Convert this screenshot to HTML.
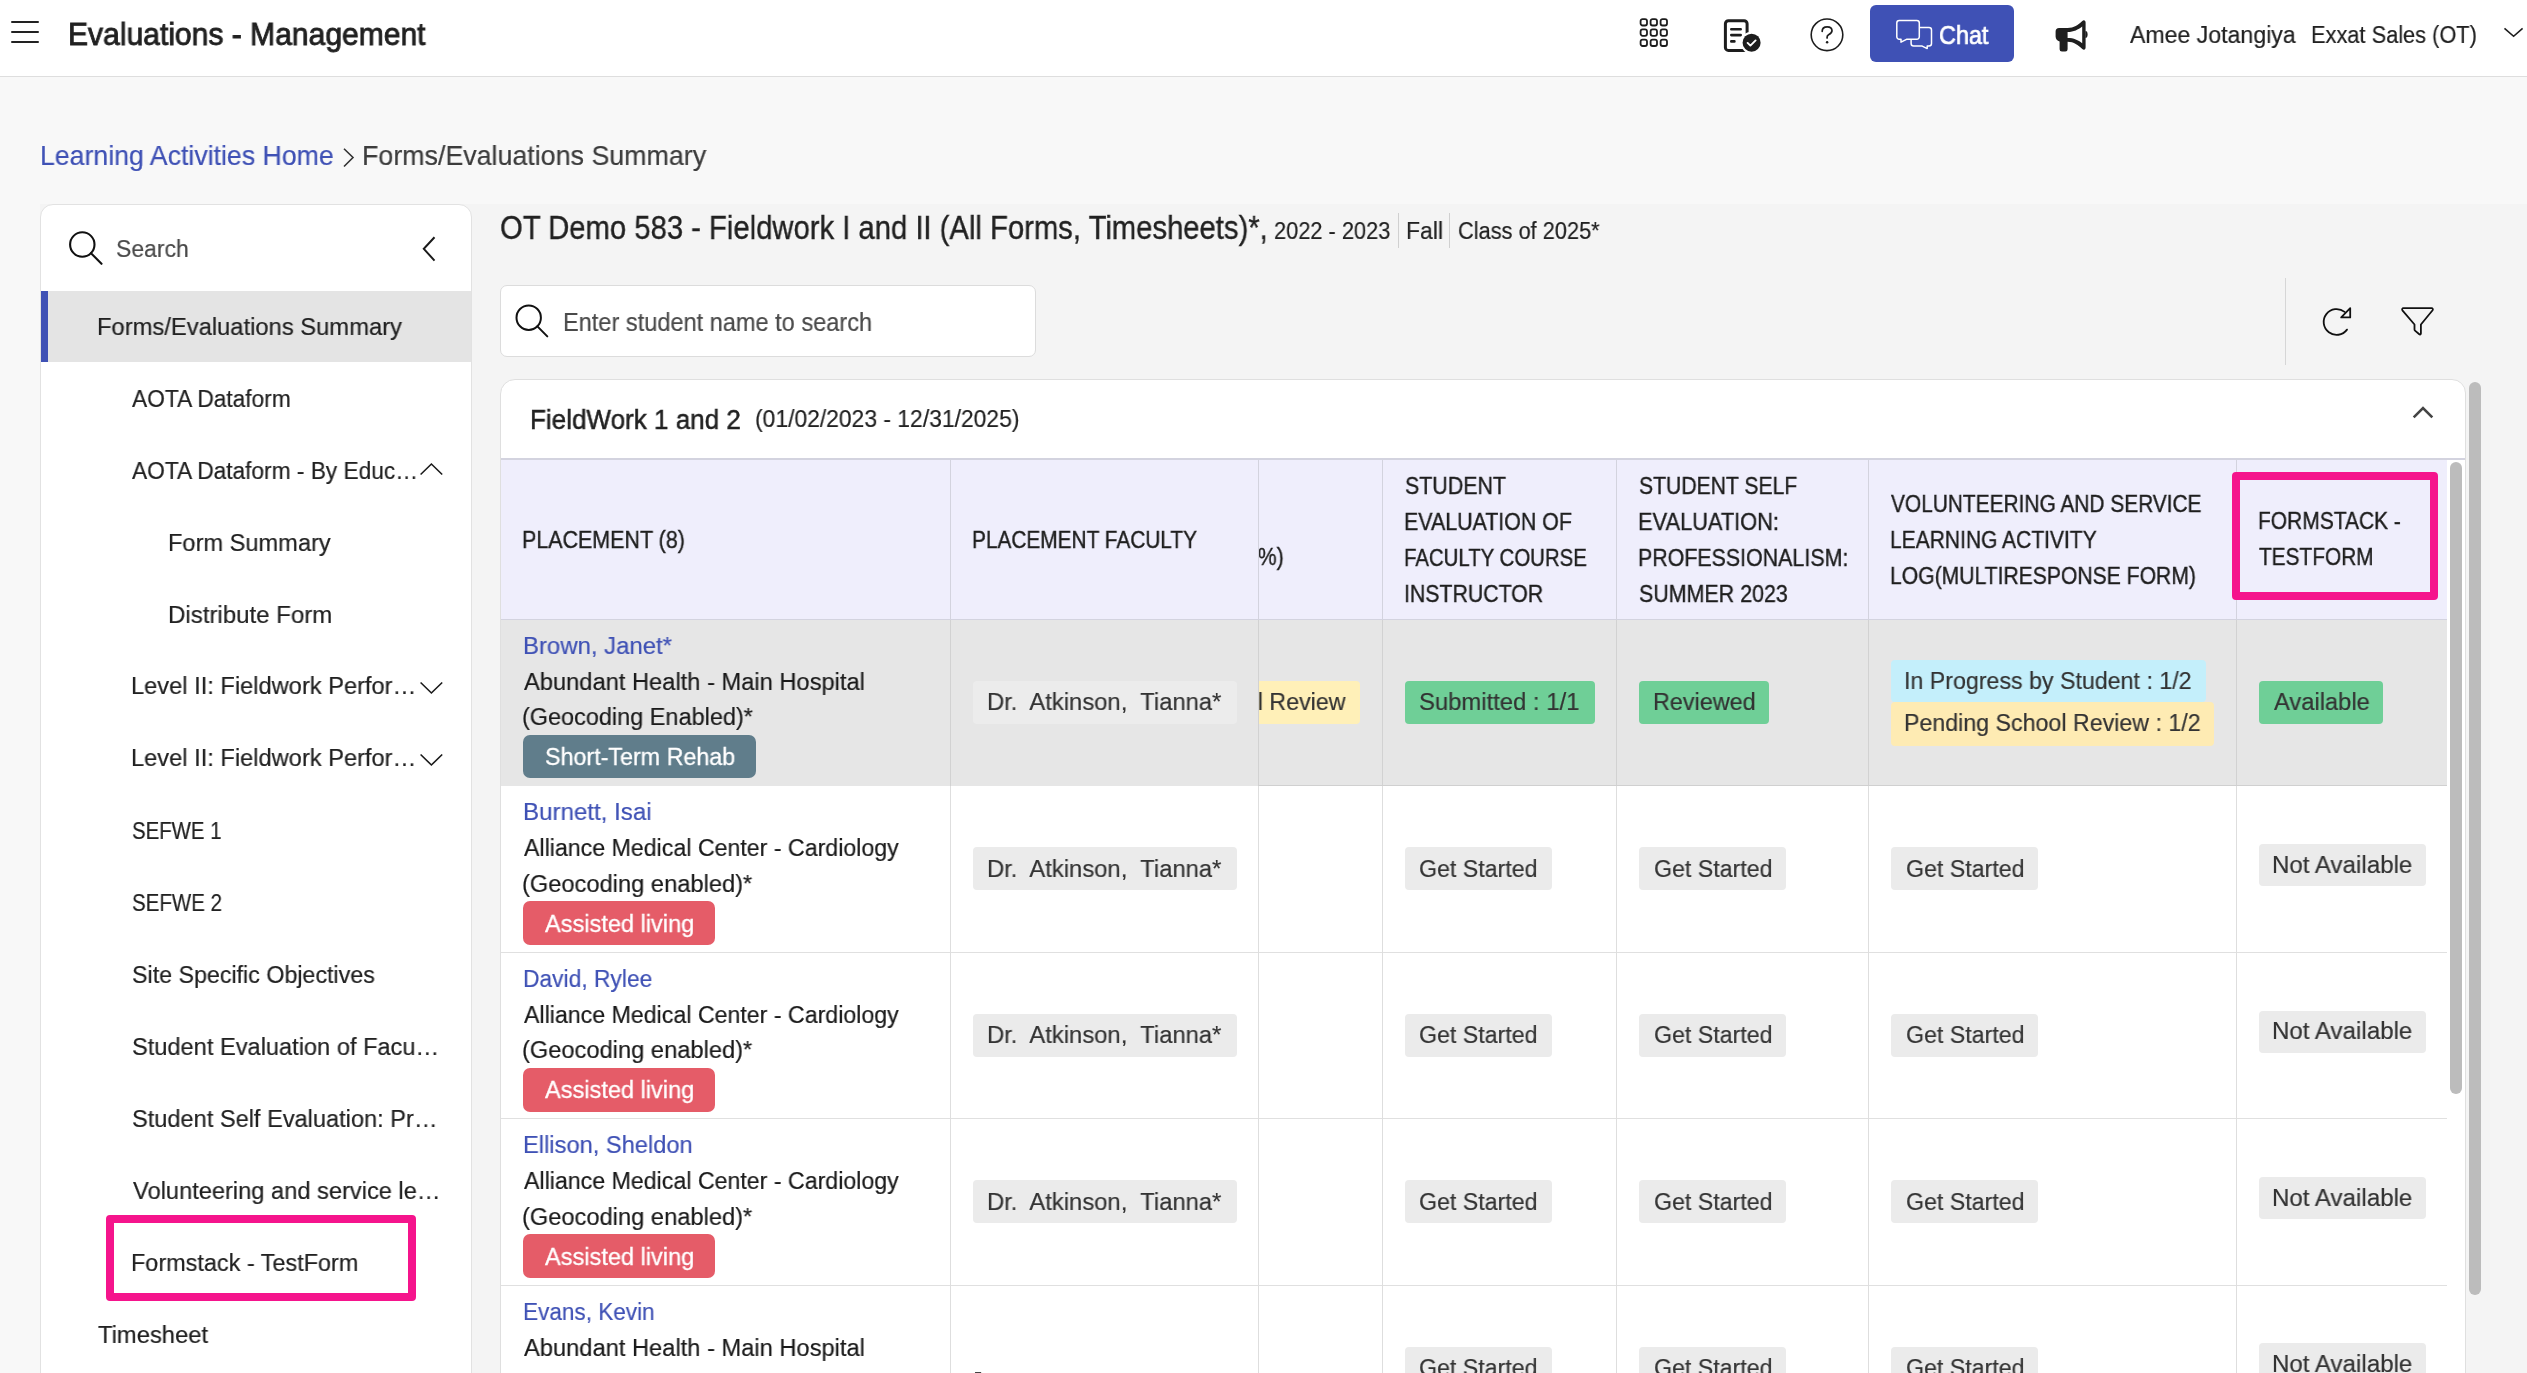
<!DOCTYPE html>
<html>
<head>
<meta charset="utf-8">
<title>Evaluations - Management</title>
<style>
html,body{margin:0;padding:0;}
body{background:#f8f8f8;font-family:"Liberation Sans",sans-serif;}
#root{position:relative;width:2527px;height:1373px;overflow:hidden;background:#f8f8f8;}
.a{position:absolute;box-sizing:border-box;}
.t{position:absolute;line-height:1;white-space:pre;transform-origin:0 0;will-change:transform;font-family:"Liberation Sans",sans-serif;}
svg{position:absolute;overflow:visible;}
</style>
</head>
<body>
<div id="root">
<!-- main area background -->
<div class="a" style="left:40px;top:204px;width:2487px;height:1169px;background:#f4f4f4;"></div>

<!-- header -->
<div class="a" style="left:0;top:0;width:2527px;height:77px;background:#fff;border-bottom:1px solid #dedede;"></div>
<!-- hamburger -->
<div class="a" style="left:11px;top:20.6px;width:28px;height:2.4px;background:#222;border-radius:1px;"></div>
<div class="a" style="left:11px;top:30.6px;width:28px;height:2.4px;background:#222;border-radius:1px;"></div>
<div class="a" style="left:11px;top:40.7px;width:28px;height:2.4px;background:#222;border-radius:1px;"></div>

<!-- grid icon -->
<svg style="left:1638px;top:17px" width="32" height="32" viewBox="0 0 32 32">
  <g fill="none" stroke="#1d1d1d" stroke-width="1.8">
    <rect x="2.6" y="2.1" width="6.4" height="6.4" rx="2"/><rect x="12.6" y="2.1" width="6.4" height="6.4" rx="2"/><rect x="22.6" y="2.1" width="6.4" height="6.4" rx="2"/>
    <rect x="2.6" y="12.4" width="6.4" height="6.4" rx="2"/><rect x="12.6" y="12.4" width="6.4" height="6.4" rx="2"/><rect x="22.6" y="12.4" width="6.4" height="6.4" rx="2"/>
    <rect x="2.6" y="22.6" width="6.4" height="6.4" rx="2"/><rect x="12.6" y="22.6" width="6.4" height="6.4" rx="2"/><rect x="22.6" y="22.6" width="6.4" height="6.4" rx="2"/>
  </g>
</svg>
<!-- doc check icon -->
<svg style="left:1720px;top:15px" width="44" height="40" viewBox="0 0 44 40">
  <rect x="5.4" y="5.8" width="21.7" height="29.6" rx="3" fill="none" stroke="#1d1d1d" stroke-width="3"/>
  <path d="M11.3 14.2 H20.7 M11.3 20.1 H20.7 M11.3 26.4 H14.4" fill="none" stroke="#1d1d1d" stroke-width="2.6" stroke-linecap="round"/>
  <circle cx="31.6" cy="27.7" r="11" fill="#fff"/>
  <circle cx="31.6" cy="27.7" r="9" fill="#1d1d1d"/>
  <path d="M27.6 27.9 L30.4 30.6 L35.6 25.4" fill="none" stroke="#fff" stroke-width="1.9" stroke-linecap="round" stroke-linejoin="round"/>
</svg>
<!-- help icon -->
<svg style="left:1807px;top:15px" width="40" height="40" viewBox="0 0 40 40">
  <circle cx="20" cy="19.8" r="15.8" fill="none" stroke="#1d1d1d" stroke-width="1.6"/>
  <path d="M15.2 16.3 C15.2 13.6 17.3 11.9 20.2 11.9 C23.1 11.9 25 13.6 25 15.8 C25 18 23.2 18.9 21.6 19.7 C20.5 20.3 20.1 21 20.1 22.2 V23" fill="none" stroke="#1d1d1d" stroke-width="1.7" stroke-linecap="round"/>
  <circle cx="20.1" cy="27.3" r="1.25" fill="#1d1d1d"/>
</svg>
<!-- chat button -->
<div class="a" style="left:1870px;top:5px;width:144px;height:57px;background:#3f51b5;border-radius:6px;"></div>
<svg style="left:1893px;top:17px" width="44" height="36" viewBox="0 0 44 36">
  <path d="M6.3 3.6 H23.8 a2.5 2.5 0 0 1 2.5 2.5 V19.8 a2.5 2.5 0 0 1 -2.5 2.5 H13.5 L8 25.2 V22.3 H6.3 a2.5 2.5 0 0 1 -2.5 -2.5 V6.1 a2.5 2.5 0 0 1 2.5 -2.5 Z" fill="none" stroke="#fff" stroke-width="1.5" stroke-linejoin="round"/>
  <path d="M26.3 10.5 H36 a2.5 2.5 0 0 1 2.5 2.5 V26.6 a2.5 2.5 0 0 1 -2.5 2.5 H34.2 V31.6 L29.2 29.1 H20.6 a2.5 2.5 0 0 1 -2.5 -2.5 V22.3" fill="none" stroke="#fff" stroke-width="1.5" stroke-linejoin="round"/>
</svg>
<!-- megaphone -->
<svg style="left:2052px;top:16px" width="40" height="40" viewBox="0 0 40 40">
  <path d="M7.1 11.9 H15.6 C22 11.9 26 9 30.3 5 Q31.5 3.8 32.6 4.4 Q33.6 5 33.6 6.5 V31.5 Q33.6 33 32.6 33.6 Q31.5 34.2 30.3 33 C26 29 22 25.7 15.6 25.7 V33.2 a2.3 2.3 0 0 1 -2.3 2.3 H9.9 a2.3 2.3 0 0 1 -2.3 -2.3 V25.5 C5.3 25 3.6 23 3.6 20.5 V15.4 a3.5 3.5 0 0 1 3.5 -3.5 Z" fill="#1f1f1f"/>
  <path d="M15.6 15.9 C22 15.9 26 13.5 30.2 10.4 V27.2 C26 24 22 22 15.6 22 Z" fill="#fff"/>
  <path d="M33.4 15.1 a2.2 3.45 0 0 1 0 6.9 Z" fill="#1f1f1f"/>
</svg>
<!-- chevron down -->
<svg style="left:2500px;top:25px" width="27" height="16" viewBox="0 0 27 16">
  <path d="M4.5 3.4 L13.6 11.3 L22.6 3.4" fill="none" stroke="#1d1d1d" stroke-width="1.6"/>
</svg>
<!-- breadcrumb chevron -->
<svg style="left:340px;top:145px" width="18" height="26" viewBox="0 0 18 26">
  <path d="M4 3.7 L13 12.5 L4 21.5" fill="none" stroke="#333" stroke-width="1.6"/>
</svg>

<!-- sidebar card -->
<div class="a" style="left:40px;top:204px;width:432px;height:1200px;background:#fff;border:1px solid #e2e2e2;border-radius:13px 13px 0 0;"></div>
<!-- sidebar search icon -->
<svg style="left:64px;top:227px" width="44" height="44" viewBox="0 0 44 44">
  <circle cx="18.3" cy="17.5" r="12.2" fill="none" stroke="#111" stroke-width="2.1"/>
  <path d="M27 26.2 L37.5 36.8" fill="none" stroke="#111" stroke-width="2.1" stroke-linecap="round"/>
</svg>
<!-- sidebar collapse chevron -->
<svg style="left:416px;top:232px" width="26" height="34" viewBox="0 0 26 34">
  <path d="M18.5 5.2 L7.8 16.8 L18.5 28.6" fill="none" stroke="#1a1a1a" stroke-width="2"/>
</svg>
<!-- active item -->
<div class="a" style="left:41px;top:291px;width:430px;height:71px;background:#e4e4e4;"></div>
<div class="a" style="left:41px;top:291px;width:7px;height:71px;background:#3f51b5;"></div>
<!-- sidebar chevrons -->
<svg style="left:416px;top:458px" width="30" height="22" viewBox="0 0 30 22">
  <path d="M4.6 16.5 L15.4 6 L26.2 16.5" fill="none" stroke="#1a1a1a" stroke-width="1.6"/>
</svg>
<svg style="left:416px;top:676px" width="30" height="22" viewBox="0 0 30 22">
  <path d="M4.6 6.5 L15.4 17 L26.2 6.5" fill="none" stroke="#1a1a1a" stroke-width="1.6"/>
</svg>
<svg style="left:416px;top:748px" width="30" height="22" viewBox="0 0 30 22">
  <path d="M4.6 6.5 L15.4 17 L26.2 6.5" fill="none" stroke="#1a1a1a" stroke-width="1.6"/>
</svg>
<!-- pink highlight sidebar -->
<div class="a" style="left:106px;top:1215px;width:310px;height:86px;border:8px solid #f5148c;border-radius:4px;"></div>

<!-- title separators -->
<div class="a" style="left:1398px;top:213px;width:1px;height:35px;background:#d0d0d0;"></div>
<div class="a" style="left:1449px;top:213px;width:1px;height:35px;background:#d0d0d0;"></div>

<!-- student search box -->
<div class="a" style="left:500px;top:285px;width:536px;height:72px;background:#fff;border:1px solid #dcdcdc;border-radius:7px;"></div>
<svg style="left:510px;top:300px" width="44" height="44" viewBox="0 0 44 44">
  <circle cx="18.7" cy="17.7" r="12.2" fill="none" stroke="#111" stroke-width="2"/>
  <path d="M27.4 26.4 L37.3 36.4" fill="none" stroke="#111" stroke-width="2" stroke-linecap="round"/>
</svg>
<!-- toolbar separator -->
<div class="a" style="left:2285px;top:278px;width:1px;height:87px;background:#d6d6d6;"></div>
<!-- refresh icon -->
<svg style="left:2316px;top:302px" width="40" height="40" viewBox="0 0 40 40">
  <path d="M28.6 9.9 A12.9 12.9 0 1 0 31 27.6" fill="none" stroke="#111" stroke-width="1.8" stroke-linecap="round"/>
  <path d="M34.2 6.2 V15.4 H25.2 Z" fill="none" stroke="#111" stroke-width="1.8" stroke-linejoin="round"/>
</svg>
<!-- filter icon -->
<svg style="left:2396px;top:303px" width="44" height="40" viewBox="0 0 44 40">
  <path d="M7.4 5.2 H35.6 a1.3 1.3 0 0 1 1 2.1 L24.9 21.5 V30.5 a1 1 0 0 1 -1.6 0.8 L19 27.6 a1.5 1.5 0 0 1 -0.5 -1.1 V21.5 L6.4 7.3 a1.3 1.3 0 0 1 1 -2.1 Z" fill="none" stroke="#111" stroke-width="1.8" stroke-linejoin="round"/>
</svg>

<!-- card -->
<div class="a" style="left:500px;top:379px;width:1966px;height:1100px;background:#fff;border:1px solid #dfdfdf;border-radius:15px 14px 0 0;"></div>
<!-- card chevron up -->
<svg style="left:2408px;top:398px" width="30" height="26" viewBox="0 0 30 26">
  <path d="M5.7 19.3 L15 10 L24.3 19.3" fill="none" stroke="#444" stroke-width="2.6"/>
</svg>

<!-- table header -->
<div class="a" style="left:501px;top:458px;width:1946px;height:162px;background:#efeefc;border-top:1.5px solid #d3d3df;border-bottom:1px solid #d3d3df;"></div>
<div class="a" style="left:501px;top:458px;width:1964px;height:1.5px;background:#d3d3df;"></div>
<!-- row 1 hover bg -->
<div class="a" style="left:501px;top:620px;width:1946px;height:166px;background:#e6e6e6;"></div>
<!-- row borders -->

<div class="a" style="left:501px;top:952px;width:1946px;height:1px;background:#e0e0e0;"></div>
<div class="a" style="left:501px;top:1118px;width:1946px;height:1px;background:#e0e0e0;"></div>
<div class="a" style="left:501px;top:1285px;width:1946px;height:1px;background:#e0e0e0;"></div>
<!-- column dividers -->
<div class="a" style="left:950px;top:459px;width:1px;height:161px;background:#d3d3de;"></div><div class="a" style="left:950px;top:620px;width:1px;height:753px;background:#dedede;"></div>
<div class="a" style="left:1258px;top:459px;width:1px;height:161px;background:#d3d3de;"></div><div class="a" style="left:1258px;top:620px;width:1px;height:753px;background:#dedede;"></div>
<div class="a" style="left:1382px;top:459px;width:1px;height:161px;background:#d3d3de;"></div><div class="a" style="left:1382px;top:620px;width:1px;height:753px;background:#dedede;"></div>
<div class="a" style="left:1616px;top:459px;width:1px;height:161px;background:#d3d3de;"></div><div class="a" style="left:1616px;top:620px;width:1px;height:753px;background:#dedede;"></div>
<div class="a" style="left:1868px;top:459px;width:1px;height:161px;background:#d3d3de;"></div><div class="a" style="left:1868px;top:620px;width:1px;height:753px;background:#dedede;"></div>
<div class="a" style="left:2236px;top:459px;width:1px;height:161px;background:#d3d3de;"></div><div class="a" style="left:2236px;top:620px;width:1px;height:753px;background:#dedede;"></div>
<div class="a" style="left:950px;top:620px;width:1px;height:166px;background:#d2d2d2;"></div><div class="a" style="left:1258px;top:620px;width:1px;height:166px;background:#d2d2d2;"></div><div class="a" style="left:1382px;top:620px;width:1px;height:166px;background:#d2d2d2;"></div><div class="a" style="left:1616px;top:620px;width:1px;height:166px;background:#d2d2d2;"></div><div class="a" style="left:1868px;top:620px;width:1px;height:166px;background:#d2d2d2;"></div><div class="a" style="left:2236px;top:620px;width:1px;height:166px;background:#d2d2d2;"></div>
<div class="a" style="left:1258px;top:785px;width:1189px;height:1px;background:#d0d0d0;"></div>
<!-- pink highlight header -->
<div class="a" style="left:2232px;top:472px;width:206px;height:128px;border:8px solid #f5148c;border-radius:4px;"></div>

<!-- scrollbars -->
<div class="a" style="left:2450px;top:462px;width:12px;height:632px;background:#bcbcbc;border-radius:6px;"></div>
<div class="a" style="left:2469px;top:382px;width:12px;height:913px;background:#bcbcbc;border-radius:6px;"></div>

<!-- CHIPS: row1 -->
<div class="a" style="left:973px;top:681px;width:264px;height:43px;background:#ececec;border-radius:4px;"></div>
<div class="a" style="left:1259px;top:681px;width:101px;height:43px;overflow:hidden;"><div class="a" style="left:-20px;top:0;width:121px;height:43px;background:#fff0b8;border-radius:4px;"></div></div>
<div class="a" style="left:1405px;top:681px;width:190px;height:43px;background:#6fcf97;border-radius:4px;"></div>
<div class="a" style="left:1639px;top:681px;width:130px;height:43px;background:#6fcf97;border-radius:4px;"></div>
<div class="a" style="left:1891px;top:659.5px;width:315px;height:42px;background:#c4effb;border-radius:4px;"></div>
<div class="a" style="left:1891px;top:702px;width:323px;height:44px;background:#feebb3;border-radius:4px;"></div>
<div class="a" style="left:2259px;top:681px;width:124px;height:43px;background:#6fcf97;border-radius:4px;"></div>
<!-- badges -->
<div class="a" style="left:523px;top:735px;width:233px;height:43px;background:#607d8b;border-radius:7px;"></div>
<div class="a" style="left:523px;top:901px;width:192px;height:44px;background:#e55c68;border-radius:7px;"></div>
<div class="a" style="left:523px;top:1067.5px;width:192px;height:44px;background:#e55c68;border-radius:7px;"></div>
<div class="a" style="left:523px;top:1234px;width:192px;height:44px;background:#e55c68;border-radius:7px;"></div>
<!-- Dr chips rows 2-4 -->
<div class="a" style="left:973px;top:847px;width:264px;height:43px;background:#ebebeb;border-radius:4px;"></div>
<div class="a" style="left:973px;top:1014px;width:264px;height:43px;background:#ebebeb;border-radius:4px;"></div>
<div class="a" style="left:973px;top:1180px;width:264px;height:43px;background:#ebebeb;border-radius:4px;"></div>
<!-- get started chips rows 2-5 -->
<div class="a" style="left:1405px;top:847px;width:147px;height:43px;background:#ebebeb;border-radius:4px;"></div>
<div class="a" style="left:1639px;top:847px;width:147px;height:43px;background:#ebebeb;border-radius:4px;"></div>
<div class="a" style="left:1891px;top:847px;width:147px;height:43px;background:#ebebeb;border-radius:4px;"></div>
<div class="a" style="left:2259px;top:844px;width:167px;height:42px;background:#ebebeb;border-radius:4px;"></div>
<div class="a" style="left:1405px;top:1014px;width:147px;height:43px;background:#ebebeb;border-radius:4px;"></div>
<div class="a" style="left:1639px;top:1014px;width:147px;height:43px;background:#ebebeb;border-radius:4px;"></div>
<div class="a" style="left:1891px;top:1014px;width:147px;height:43px;background:#ebebeb;border-radius:4px;"></div>
<div class="a" style="left:2259px;top:1011px;width:167px;height:42px;background:#ebebeb;border-radius:4px;"></div>
<div class="a" style="left:1405px;top:1180px;width:147px;height:43px;background:#ebebeb;border-radius:4px;"></div>
<div class="a" style="left:1639px;top:1180px;width:147px;height:43px;background:#ebebeb;border-radius:4px;"></div>
<div class="a" style="left:1891px;top:1180px;width:147px;height:43px;background:#ebebeb;border-radius:4px;"></div>
<div class="a" style="left:2259px;top:1177px;width:167px;height:42px;background:#ebebeb;border-radius:4px;"></div>
<div class="a" style="left:1405px;top:1347px;width:147px;height:43px;background:#ebebeb;border-radius:4px;"></div>
<div class="a" style="left:1639px;top:1347px;width:147px;height:43px;background:#ebebeb;border-radius:4px;"></div>
<div class="a" style="left:1891px;top:1347px;width:147px;height:43px;background:#ebebeb;border-radius:4px;"></div>
<div class="a" style="left:2259px;top:1342.5px;width:167px;height:42px;background:#ebebeb;border-radius:4px;"></div>

<div class=t style="left:68.32px;top:19.25px;font-size:31.3px;font-weight:400;color:#212121;transform:scaleX(0.9604);-webkit-text-stroke:0.85px #212121;">Evaluations - Management</div>
<div class=t style="left:1939.39px;top:23.00px;font-size:25.8px;font-weight:400;color:#ffffff;transform:scaleX(0.9057);-webkit-text-stroke:0.7px #ffffff;">Chat</div>
<div class=t style="left:2129.50px;top:23.22px;font-size:24.35px;font-weight:400;color:#212121;transform:scaleX(0.9491);-webkit-text-stroke:0.2px #212121;">Amee Jotangiya</div>
<div class=t style="left:2310.81px;top:23.22px;font-size:24.35px;font-weight:400;color:#212121;transform:scaleX(0.8951);-webkit-text-stroke:0.2px #212121;">Exxat Sales (OT)</div>
<div class=t style="left:39.86px;top:142.23px;font-size:27.54px;font-weight:400;color:#3f51b5;transform:scaleX(0.9693);-webkit-text-stroke:0.2px #3f51b5;">Learning Activities Home</div>
<div class=t style="left:361.85px;top:142.23px;font-size:27.54px;font-weight:400;color:#3c3c3c;transform:scaleX(0.9735);-webkit-text-stroke:0.2px #3c3c3c;">Forms/Evaluations Summary</div>
<div class=t style="left:116.07px;top:236.78px;font-size:24.64px;font-weight:400;color:#4a4a4a;transform:scaleX(0.9333);-webkit-text-stroke:0.2px #4a4a4a;">Search</div>
<div class=t style="left:97.05px;top:314.92px;font-size:24.35px;font-weight:400;color:#212121;transform:scaleX(0.9758);-webkit-text-stroke:0.2px #212121;">Forms/Evaluations Summary</div>
<div class=t style="left:132.20px;top:387.22px;font-size:24.35px;font-weight:400;color:#212121;transform:scaleX(0.9337);-webkit-text-stroke:0.2px #212121;">AOTA Dataform</div>
<div class=t style="left:132.20px;top:459.02px;font-size:24.35px;font-weight:400;color:#212121;transform:scaleX(0.9327);-webkit-text-stroke:0.2px #212121;">AOTA Dataform - By Educ…</div>
<div class=t style="left:167.56px;top:530.72px;font-size:24.35px;font-weight:400;color:#212121;transform:scaleX(0.9699);-webkit-text-stroke:0.2px #212121;">Form Summary</div>
<div class=t style="left:167.52px;top:602.82px;font-size:24.35px;font-weight:400;color:#212121;transform:scaleX(0.9877);-webkit-text-stroke:0.2px #212121;">Distribute Form</div>
<div class=t style="left:131.26px;top:674.02px;font-size:24.35px;font-weight:400;color:#212121;transform:scaleX(0.9715);-webkit-text-stroke:0.2px #212121;">Level II: Fieldwork Perfor…</div>
<div class=t style="left:131.26px;top:746.22px;font-size:24.35px;font-weight:400;color:#212121;transform:scaleX(0.9715);-webkit-text-stroke:0.2px #212121;">Level II: Fieldwork Perfor…</div>
<div class=t style="left:131.96px;top:818.92px;font-size:24.35px;font-weight:400;color:#212121;transform:scaleX(0.8381);-webkit-text-stroke:0.2px #212121;">SEFWE 1</div>
<div class=t style="left:131.96px;top:891.02px;font-size:24.35px;font-weight:400;color:#212121;transform:scaleX(0.8429);-webkit-text-stroke:0.2px #212121;">SEFWE 2</div>
<div class=t style="left:131.85px;top:962.52px;font-size:24.35px;font-weight:400;color:#212121;transform:scaleX(0.9545);-webkit-text-stroke:0.2px #212121;">Site Specific Objectives</div>
<div class=t style="left:131.83px;top:1034.62px;font-size:24.35px;font-weight:400;color:#212121;transform:scaleX(0.9699);-webkit-text-stroke:0.2px #212121;">Student Evaluation of Facu…</div>
<div class=t style="left:131.73px;top:1107.12px;font-size:24.35px;font-weight:400;color:#212121;transform:scaleX(0.9688);-webkit-text-stroke:0.2px #212121;">Student Self Evaluation: Pr…</div>
<div class=t style="left:132.70px;top:1178.62px;font-size:24.35px;font-weight:400;color:#212121;transform:scaleX(0.9712);-webkit-text-stroke:0.2px #212121;">Volunteering and service le…</div>
<div class=t style="left:131.28px;top:1251.02px;font-size:24.35px;font-weight:400;color:#212121;transform:scaleX(0.9622);-webkit-text-stroke:0.2px #212121;">Formstack - TestForm</div>
<div class=t style="left:97.72px;top:1322.52px;font-size:24.35px;font-weight:400;color:#212121;transform:scaleX(0.9759);-webkit-text-stroke:0.2px #212121;">Timesheet</div>
<div class=t style="left:499.59px;top:211.79px;font-size:32.32px;font-weight:400;color:#212121;transform:scaleX(0.9046);-webkit-text-stroke:0.35px #212121;">OT Demo 583 - Fieldwork I and II (All Forms, Timesheets)*,</div>
<div class=t style="left:1274.01px;top:218.88px;font-size:24.64px;font-weight:400;color:#212121;transform:scaleX(0.8853);-webkit-text-stroke:0.2px #212121;">2022 - 2023</div>
<div class=t style="left:1405.53px;top:218.88px;font-size:24.64px;font-weight:400;color:#212121;transform:scaleX(0.9333);-webkit-text-stroke:0.2px #212121;">Fall</div>
<div class=t style="left:1457.72px;top:218.88px;font-size:24.64px;font-weight:400;color:#212121;transform:scaleX(0.8843);-webkit-text-stroke:0.2px #212121;">Class of 2025*</div>
<div class=t style="left:562.53px;top:309.69px;font-size:25.22px;font-weight:400;color:#4a4a4a;transform:scaleX(0.9343);-webkit-text-stroke:0.2px #4a4a4a;">Enter student name to search</div>
<div class=t style="left:529.86px;top:406.75px;font-size:26.81px;font-weight:400;color:#212121;transform:scaleX(0.9720);-webkit-text-stroke:0.5px #212121;">FieldWork 1 and 2</div>
<div class=t style="left:754.72px;top:407.02px;font-size:24.35px;font-weight:400;color:#212121;transform:scaleX(0.9392);-webkit-text-stroke:0.2px #212121;">(01/02/2023 - 12/31/2025)</div>
<div class=t style="left:522.34px;top:528.02px;font-size:24.35px;font-weight:400;color:#1e1e1e;transform:scaleX(0.8812);-webkit-text-stroke:0.4px #1e1e1e;">PLACEMENT (8)</div>
<div class=t style="left:972.49px;top:528.22px;font-size:24.35px;font-weight:400;color:#1e1e1e;transform:scaleX(0.8558);-webkit-text-stroke:0.4px #1e1e1e;">PLACEMENT FACULTY</div>
<div class=t style="left:1404.82px;top:474.02px;font-size:24.35px;font-weight:400;color:#1e1e1e;transform:scaleX(0.8788);-webkit-text-stroke:0.4px #1e1e1e;">STUDENT</div>
<div class=t style="left:1403.94px;top:509.82px;font-size:24.35px;font-weight:400;color:#1e1e1e;transform:scaleX(0.8787);-webkit-text-stroke:0.4px #1e1e1e;">EVALUATION OF</div>
<div class=t style="left:1404.02px;top:545.82px;font-size:24.35px;font-weight:400;color:#1e1e1e;transform:scaleX(0.8377);-webkit-text-stroke:0.4px #1e1e1e;">FACULTY COURSE</div>
<div class=t style="left:1403.95px;top:581.82px;font-size:24.35px;font-weight:400;color:#1e1e1e;transform:scaleX(0.8750);-webkit-text-stroke:0.4px #1e1e1e;">INSTRUCTOR</div>
<div class=t style="left:1638.73px;top:474.02px;font-size:24.35px;font-weight:400;color:#1e1e1e;transform:scaleX(0.8689);-webkit-text-stroke:0.4px #1e1e1e;">STUDENT SELF</div>
<div class=t style="left:1637.81px;top:509.82px;font-size:24.35px;font-weight:400;color:#1e1e1e;transform:scaleX(0.8961);-webkit-text-stroke:0.4px #1e1e1e;">EVALUATION:</div>
<div class=t style="left:1637.84px;top:545.82px;font-size:24.35px;font-weight:400;color:#1e1e1e;transform:scaleX(0.8783);-webkit-text-stroke:0.4px #1e1e1e;">PROFESSIONALISM:</div>
<div class=t style="left:1638.72px;top:581.82px;font-size:24.35px;font-weight:400;color:#1e1e1e;transform:scaleX(0.8802);-webkit-text-stroke:0.4px #1e1e1e;">SUMMER 2023</div>
<div class=t style="left:1891.40px;top:491.92px;font-size:24.35px;font-weight:400;color:#1e1e1e;transform:scaleX(0.8576);-webkit-text-stroke:0.4px #1e1e1e;">VOLUNTEERING AND SERVICE</div>
<div class=t style="left:1889.67px;top:528.22px;font-size:24.35px;font-weight:400;color:#1e1e1e;transform:scaleX(0.8633);-webkit-text-stroke:0.4px #1e1e1e;">LEARNING ACTIVITY</div>
<div class=t style="left:1889.66px;top:563.82px;font-size:24.35px;font-weight:400;color:#1e1e1e;transform:scaleX(0.8676);-webkit-text-stroke:0.4px #1e1e1e;">LOG(MULTIRESPONSE FORM)</div>
<div class=t style="left:2257.68px;top:509.12px;font-size:24.35px;font-weight:400;color:#1e1e1e;transform:scaleX(0.8613);-webkit-text-stroke:0.4px #1e1e1e;">FORMSTACK -</div>
<div class=t style="left:2258.54px;top:545.42px;font-size:24.35px;font-weight:400;color:#1e1e1e;transform:scaleX(0.8565);-webkit-text-stroke:0.4px #1e1e1e;">TESTFORM</div>
<div class=a style="left:1259px;top:460px;width:123px;height:159px;overflow:hidden"><div class=a style="left:-1259px;top:-460px;width:2527px;height:1373px"><div class=t style="left:1123.86px;top:545.12px;font-size:24.35px;font-weight:400;color:#1e1e1e;transform:scaleX(0.8700);-webkit-text-stroke:0.4px #1e1e1e;">TIMESHEET (%)</div></div></div>
<div class=a style="left:1259px;top:660px;width:123px;height:100px;overflow:hidden"><div class=a style="left:-1259px;top:-660px;width:2527px;height:1373px"><div class=t style="left:1099.87px;top:689.82px;font-size:24.35px;font-weight:400;color:#333333;transform:scaleX(0.9550);-webkit-text-stroke:0.2px #333333;">Pending School Review</div></div></div>
<div class=t style="left:522.63px;top:633.62px;font-size:24.35px;font-weight:400;color:#3f51b5;transform:scaleX(0.9832);-webkit-text-stroke:0.2px #3f51b5;">Brown, Janet*</div>
<div class=t style="left:523.70px;top:669.52px;font-size:24.35px;font-weight:400;color:#1a1a1a;transform:scaleX(0.9728);-webkit-text-stroke:0.2px #1a1a1a;">Abundant Health - Main Hospital</div>
<div class=t style="left:521.77px;top:705.02px;font-size:24.35px;font-weight:400;color:#1a1a1a;transform:scaleX(0.9637);-webkit-text-stroke:0.2px #1a1a1a;">(Geocoding Enabled)*</div>
<div class=t style="left:544.54px;top:744.82px;font-size:24.35px;font-weight:400;color:#ffffff;transform:scaleX(0.9563);-webkit-text-stroke:0.3px #fff;">Short-Term Rehab</div>
<div class=t style="left:986.84px;top:690.02px;font-size:24.35px;font-weight:400;color:#333333;transform:scaleX(0.9785);-webkit-text-stroke:0.2px #333333;">Dr.  Atkinson,  Tianna*</div>
<div class=t style="left:1419.22px;top:689.82px;font-size:24.35px;font-weight:400;color:#333333;transform:scaleX(0.9796);-webkit-text-stroke:0.2px #333333;">Submitted : 1/1</div>
<div class=t style="left:1652.68px;top:689.82px;font-size:24.35px;font-weight:400;color:#333333;transform:scaleX(0.9612);-webkit-text-stroke:0.2px #333333;">Reviewed</div>
<div class=t style="left:1904.19px;top:668.72px;font-size:24.35px;font-weight:400;color:#333333;transform:scaleX(0.9528);-webkit-text-stroke:0.2px #333333;">In Progress by Student : 1/2</div>
<div class=t style="left:1904.19px;top:711.42px;font-size:24.35px;font-weight:400;color:#333333;transform:scaleX(0.9529);-webkit-text-stroke:0.2px #333333;">Pending School Review : 1/2</div>
<div class=t style="left:2273.60px;top:689.82px;font-size:24.35px;font-weight:400;color:#333333;transform:scaleX(0.9742);-webkit-text-stroke:0.2px #333333;">Available</div>
<div class=t style="left:522.62px;top:800.12px;font-size:24.35px;font-weight:400;color:#3f51b5;transform:scaleX(0.9897);-webkit-text-stroke:0.2px #3f51b5;">Burnett, Isai</div>
<div class=t style="left:523.70px;top:836.02px;font-size:24.35px;font-weight:400;color:#1a1a1a;transform:scaleX(0.9518);-webkit-text-stroke:0.2px #1a1a1a;">Alliance Medical Center - Cardiology</div>
<div class=t style="left:521.76px;top:871.52px;font-size:24.35px;font-weight:400;color:#1a1a1a;transform:scaleX(0.9722);-webkit-text-stroke:0.2px #1a1a1a;">(Geocoding enabled)*</div>
<div class=t style="left:544.60px;top:911.82px;font-size:24.35px;font-weight:400;color:#ffffff;transform:scaleX(0.9673);-webkit-text-stroke:0.3px #fff;">Assisted living</div>
<div class=t style="left:986.84px;top:856.52px;font-size:24.35px;font-weight:400;color:#333333;transform:scaleX(0.9785);-webkit-text-stroke:0.2px #333333;">Dr.  Atkinson,  Tianna*</div>
<div class=t style="left:1419.25px;top:856.72px;font-size:24.35px;font-weight:400;color:#333333;transform:scaleX(0.9516);-webkit-text-stroke:0.2px #333333;">Get Started</div>
<div class=t style="left:1653.65px;top:856.72px;font-size:24.35px;font-weight:400;color:#333333;transform:scaleX(0.9516);-webkit-text-stroke:0.2px #333333;">Get Started</div>
<div class=t style="left:1905.65px;top:856.72px;font-size:24.35px;font-weight:400;color:#333333;transform:scaleX(0.9516);-webkit-text-stroke:0.2px #333333;">Get Started</div>
<div class=t style="left:2271.62px;top:852.82px;font-size:24.35px;font-weight:400;color:#333333;transform:scaleX(0.9906);-webkit-text-stroke:0.2px #333333;">Not Available</div>
<div class=t style="left:522.73px;top:966.62px;font-size:24.35px;font-weight:400;color:#3f51b5;transform:scaleX(0.9370);-webkit-text-stroke:0.2px #3f51b5;">David, Rylee</div>
<div class=t style="left:523.70px;top:1002.52px;font-size:24.35px;font-weight:400;color:#1a1a1a;transform:scaleX(0.9518);-webkit-text-stroke:0.2px #1a1a1a;">Alliance Medical Center - Cardiology</div>
<div class=t style="left:521.76px;top:1038.02px;font-size:24.35px;font-weight:400;color:#1a1a1a;transform:scaleX(0.9722);-webkit-text-stroke:0.2px #1a1a1a;">(Geocoding enabled)*</div>
<div class=t style="left:544.60px;top:1078.32px;font-size:24.35px;font-weight:400;color:#ffffff;transform:scaleX(0.9673);-webkit-text-stroke:0.3px #fff;">Assisted living</div>
<div class=t style="left:986.84px;top:1023.02px;font-size:24.35px;font-weight:400;color:#333333;transform:scaleX(0.9785);-webkit-text-stroke:0.2px #333333;">Dr.  Atkinson,  Tianna*</div>
<div class=t style="left:1419.25px;top:1023.22px;font-size:24.35px;font-weight:400;color:#333333;transform:scaleX(0.9516);-webkit-text-stroke:0.2px #333333;">Get Started</div>
<div class=t style="left:1653.65px;top:1023.22px;font-size:24.35px;font-weight:400;color:#333333;transform:scaleX(0.9516);-webkit-text-stroke:0.2px #333333;">Get Started</div>
<div class=t style="left:1905.65px;top:1023.22px;font-size:24.35px;font-weight:400;color:#333333;transform:scaleX(0.9516);-webkit-text-stroke:0.2px #333333;">Get Started</div>
<div class=t style="left:2271.62px;top:1019.32px;font-size:24.35px;font-weight:400;color:#333333;transform:scaleX(0.9906);-webkit-text-stroke:0.2px #333333;">Not Available</div>
<div class=t style="left:522.66px;top:1133.12px;font-size:24.35px;font-weight:400;color:#3f51b5;transform:scaleX(0.9719);-webkit-text-stroke:0.2px #3f51b5;">Ellison, Sheldon</div>
<div class=t style="left:523.70px;top:1169.02px;font-size:24.35px;font-weight:400;color:#1a1a1a;transform:scaleX(0.9518);-webkit-text-stroke:0.2px #1a1a1a;">Alliance Medical Center - Cardiology</div>
<div class=t style="left:521.76px;top:1204.52px;font-size:24.35px;font-weight:400;color:#1a1a1a;transform:scaleX(0.9722);-webkit-text-stroke:0.2px #1a1a1a;">(Geocoding enabled)*</div>
<div class=t style="left:544.60px;top:1244.82px;font-size:24.35px;font-weight:400;color:#ffffff;transform:scaleX(0.9673);-webkit-text-stroke:0.3px #fff;">Assisted living</div>
<div class=t style="left:986.84px;top:1189.52px;font-size:24.35px;font-weight:400;color:#333333;transform:scaleX(0.9785);-webkit-text-stroke:0.2px #333333;">Dr.  Atkinson,  Tianna*</div>
<div class=t style="left:1419.25px;top:1189.72px;font-size:24.35px;font-weight:400;color:#333333;transform:scaleX(0.9516);-webkit-text-stroke:0.2px #333333;">Get Started</div>
<div class=t style="left:1653.65px;top:1189.72px;font-size:24.35px;font-weight:400;color:#333333;transform:scaleX(0.9516);-webkit-text-stroke:0.2px #333333;">Get Started</div>
<div class=t style="left:1905.65px;top:1189.72px;font-size:24.35px;font-weight:400;color:#333333;transform:scaleX(0.9516);-webkit-text-stroke:0.2px #333333;">Get Started</div>
<div class=t style="left:2271.62px;top:1185.82px;font-size:24.35px;font-weight:400;color:#333333;transform:scaleX(0.9906);-webkit-text-stroke:0.2px #333333;">Not Available</div>
<div class=t style="left:522.75px;top:1299.62px;font-size:24.35px;font-weight:400;color:#3f51b5;transform:scaleX(0.9259);-webkit-text-stroke:0.2px #3f51b5;">Evans, Kevin</div>
<div class=t style="left:523.70px;top:1335.52px;font-size:24.35px;font-weight:400;color:#1a1a1a;transform:scaleX(0.9728);-webkit-text-stroke:0.2px #1a1a1a;">Abundant Health - Main Hospital</div>
<div class=t style="left:974.00px;top:1359.02px;font-size:24.35px;font-weight:400;color:#333333;transform:scaleX(1.0000);-webkit-text-stroke:0.2px #333333;">-</div>
<div class=t style="left:1419.25px;top:1356.22px;font-size:24.35px;font-weight:400;color:#333333;transform:scaleX(0.9516);-webkit-text-stroke:0.2px #333333;">Get Started</div>
<div class=t style="left:1653.65px;top:1356.22px;font-size:24.35px;font-weight:400;color:#333333;transform:scaleX(0.9516);-webkit-text-stroke:0.2px #333333;">Get Started</div>
<div class=t style="left:1905.65px;top:1356.22px;font-size:24.35px;font-weight:400;color:#333333;transform:scaleX(0.9516);-webkit-text-stroke:0.2px #333333;">Get Started</div>
<div class=t style="left:2271.62px;top:1352.32px;font-size:24.35px;font-weight:400;color:#333333;transform:scaleX(0.9906);-webkit-text-stroke:0.2px #333333;">Not Available</div>
</div>
</body>
</html>
